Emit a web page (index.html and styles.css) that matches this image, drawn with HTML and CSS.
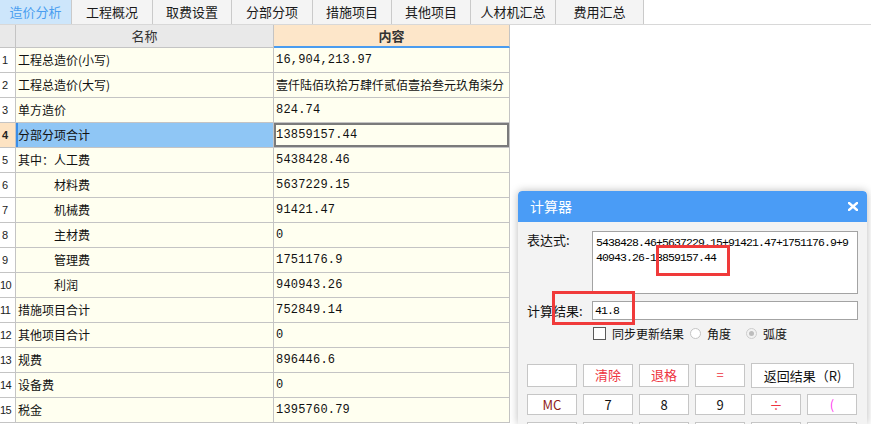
FILE: index.html
```html
<!DOCTYPE html>
<html lang="zh">
<head>
<meta charset="utf-8">
<title>造价分析</title>
<link rel="stylesheet" href="styles.css">
</head>
<body>
<div class="tabs">
  <div class="tab active">造价分析</div>
  <div class="tab">工程概况</div>
  <div class="tab">取费设置</div>
  <div class="tab">分部分项</div>
  <div class="tab">措施项目</div>
  <div class="tab">其他项目</div>
  <div class="tab">人材机汇总</div>
  <div class="tab">费用汇总</div>
</div>
<div class="grid">
  <div class="c h corner"></div><div class="c h">名称</div><div class="c h hc">内容</div>
  <div class="c n">1</div><div class="c">工程总造价(小写)</div><div class="c v">16,904,213.97</div>
  <div class="c n">2</div><div class="c">工程总造价(大写)</div><div class="c">壹仟陆佰玖拾万肆仟贰佰壹拾叁元玖角柒分</div>
  <div class="c n">3</div><div class="c">单方造价</div><div class="c v">824.74</div>
  <div class="c n sel-n">4</div><div class="c sel-name">分部分项合计</div><div class="c v sel-val">13859157.44</div>
  <div class="c n">5</div><div class="c">其中：人工费</div><div class="c v">5438428.46</div>
  <div class="c n">6</div><div class="c ind">材料费</div><div class="c v">5637229.15</div>
  <div class="c n">7</div><div class="c ind">机械费</div><div class="c v">91421.47</div>
  <div class="c n">8</div><div class="c ind">主材费</div><div class="c v">0</div>
  <div class="c n">9</div><div class="c ind">管理费</div><div class="c v">1751176.9</div>
  <div class="c n nn">10</div><div class="c ind">利润</div><div class="c v">940943.26</div>
  <div class="c n nn">11</div><div class="c">措施项目合计</div><div class="c v">752849.14</div>
  <div class="c n nn">12</div><div class="c">其他项目合计</div><div class="c v">0</div>
  <div class="c n nn">13</div><div class="c">规费</div><div class="c v">896446.6</div>
  <div class="c n nn">14</div><div class="c">设备费</div><div class="c v">0</div>
  <div class="c n nn">15</div><div class="c">税金</div><div class="c v">1395760.79</div>
</div>

<div class="calc">
  <div class="calc-title">
    <span>计算器</span>
    <svg class="close" width="10" height="9" viewBox="0 0 10 9"><path d="M1 1 L9 8 M9 1 L1 8" stroke="#fff" stroke-width="2.4" stroke-linecap="square"/></svg>
  </div>
  <div class="calc-body">
    <div class="row">
      <div class="lbl">表达式:</div>
      <div class="expr">5438428.46+5637229.15+91421.47+1751176.9+9<br>40943.26-13859157.44</div>
    </div>
    <div class="row res">
      <div class="lbl lbl-res">计算结果:</div>
      <div class="result">41.8</div>
    </div>
    <div class="opts">
      <span class="chk"></span><span class="opt-text">同步更新结果</span>
      <span class="radio"></span><span class="opt-text">角度</span>
      <span class="radio on"></span><span class="opt-text">弧度</span>
    </div>
    <div class="keys">
      <div class="key"></div>
      <div class="key red">清除</div>
      <div class="key red">退格</div>
      <div class="key red">=</div>
      <div class="key wide">返回结果（R)</div>
      <div class="key maroon">MC</div>
      <div class="key">7</div>
      <div class="key">8</div>
      <div class="key">9</div>
      <div class="key red">÷</div>
      <div class="key pink">(</div>
      <div class="key"></div>
      <div class="key"></div>
      <div class="key"></div>
      <div class="key"></div>
      <div class="key"></div>
      <div class="key"></div>
    </div>
  </div>
  <div class="mark mark1"></div>
  <div class="mark mark2"></div>
</div>
</body>
</html>
```
FILE: styles.css
```css
* { box-sizing: border-box; margin: 0; padding: 0; }
html, body { width: 871px; height: 424px; overflow: hidden; background: #fff; }
body {
  position: relative;
  font-family: "Noto Sans CJK SC", "Noto Sans", sans-serif;
  font-size: 12px;
  color: #111;
}

/* tab bar */
.tabs {
  display: grid;
  grid-template-columns: 72px 81px 79px 81px 79px 79px 85px 88px;
  height: 25px;
  border-bottom: 1px solid #d8d8d8;
}
.tab {
  background: #f4f4f4;
  border-right: 1px solid #cacaca;
  font-size: 13px;
  line-height: 24px;
  text-align: center;
  color: #1a1a1a;
}
.tab.active { background: #cde6fb; color: #4a9ef0; }

/* table */
.grid {
  display: grid;
  grid-template-columns: 16px 258px 236px;
  grid-template-rows: 23px;
  grid-auto-rows: 25px;
  width: 510px;
}
.c {
  border-right: 1px solid #c4c4c4;
  border-bottom: 1px solid #c4c4c4;
  background: #fffff0;
  line-height: 24px;
  padding-left: 2px;
  white-space: nowrap;
  overflow: hidden;
}
.h {
  background: #e9e9e9;
  text-align: center;
  font-size: 13px;
  color: #333;
  line-height: 22px;
  padding-left: 0;
}
.hc {
  background: #fde6c9;
  border-bottom: 2px solid #4a9cf0;
  font-weight: bold;
}
.n {
  background: #fff;
  font-family: "Liberation Sans", sans-serif;
  font-size: 11px;
  color: #222;
  padding-left: 2px;
  overflow: visible;
}
.nn { padding-left: 0; letter-spacing: -0.5px; }
.ind { padding-left: 38px; }
.v {
  font-family: "Liberation Mono", monospace;
  font-size: 12px;
  letter-spacing: 0.2px;
}
.sel-n { background: #fde3c3; font-weight: bold; }
.sel-name { background: #8fc6f5; box-shadow: inset 2px 0 0 #3b8ee8; }
.sel-val { box-shadow: inset 0 0 0 2px #7b7b7b; }

/* calculator window */
.calc {
  position: absolute;
  left: 518px;
  top: 191px;
  width: 349px;
  height: 233px;
  overflow: hidden;
  background: #f3f3f3;
  border-radius: 4px 4px 0 0;
  box-shadow: 0 0 8px rgba(0, 0, 0, 0.28);
}
.calc-title {
  height: 31px;
  background: #4a9cf6;
  border-radius: 4px 4px 0 0;
  color: #fff;
  font-size: 14px;
  line-height: 31px;
  padding: 0 9px 0 12px;
  display: flex;
  justify-content: space-between;
  align-items: center;
}
.calc-body { padding: 9px 9px 0; }
.row { display: flex; }
.lbl {
  width: 65px;
  font-size: 13px;
  line-height: 18px;
  color: #111;
}
.lbl-res { line-height: 19px; }
.expr {
  width: 266px;
  height: 63px;
  border: 1px solid #a3a3a3;
  background: #fff;
  padding: 3px 3px;
  font-family: "Liberation Mono", monospace;
  font-size: 11.5px;
  letter-spacing: -0.9px;
  line-height: 15px;
  color: #000;
}
.res { margin-top: 7px; }
.result {
  width: 266px;
  height: 19px;
  border: 1px solid #a3a3a3;
  background: #fff;
  padding-left: 2px;
  font-family: "Liberation Mono", monospace;
  font-size: 11.5px;
  letter-spacing: -0.9px;
  line-height: 17px;
  color: #000;
}
.opts {
  margin-top: 7px;
  height: 13px;
  padding-left: 66px;
  display: flex;
  align-items: center;
  font-size: 12px;
  line-height: 13px;
}
.chk {
  width: 13px;
  height: 13px;
  border: 1px solid #5a5a5a;
  background: #fff;
}
.opt-text { margin-left: 6px; color: #111; }
.radio {
  width: 11px;
  height: 11px;
  border-radius: 50%;
  border: 1px solid #c4c4c4;
  background: #fff;
  margin-left: 6px;
  display: flex;
  align-items: center;
  justify-content: center;
}
.radio.on { margin-left: 15px; background: #f2f2f2; border-color: #cdcdcd; }
.radio.on::after {
  content: "";
  width: 5px;
  height: 5px;
  border-radius: 50%;
  background: #bdbdbd;
}
.keys {
  margin-top: 24px;
  display: grid;
  grid-template-columns: repeat(6, 50px);
  grid-template-rows: 23px 21px 21px;
  column-gap: 6px;
  row-gap: 7px;
}
.key {
  background: #fff;
  border: 1px solid #c6c6c6;
  font-family: "Noto Sans CJK SC", "Noto Sans", sans-serif;
  font-size: 13px;
  line-height: 20px;
  text-align: center;
  color: #111;
}
.key.wide {
  grid-column: span 2;
  margin-right: 3px;
  margin-top: -1px;
  height: 25px;
  line-height: 23px;
}
.red { color: #ee3340; }
.maroon { color: #8e1a1a; }
.pink { color: #ff3cf0; }

/* annotation boxes */
.mark {
  position: absolute;
  border: 3px solid #f03a3a;
}
.mark1 { left: 138px; top: 54px; width: 74px; height: 31px; }
.mark2 { left: 34px; top: 100px; width: 83px; height: 34px; }
```
